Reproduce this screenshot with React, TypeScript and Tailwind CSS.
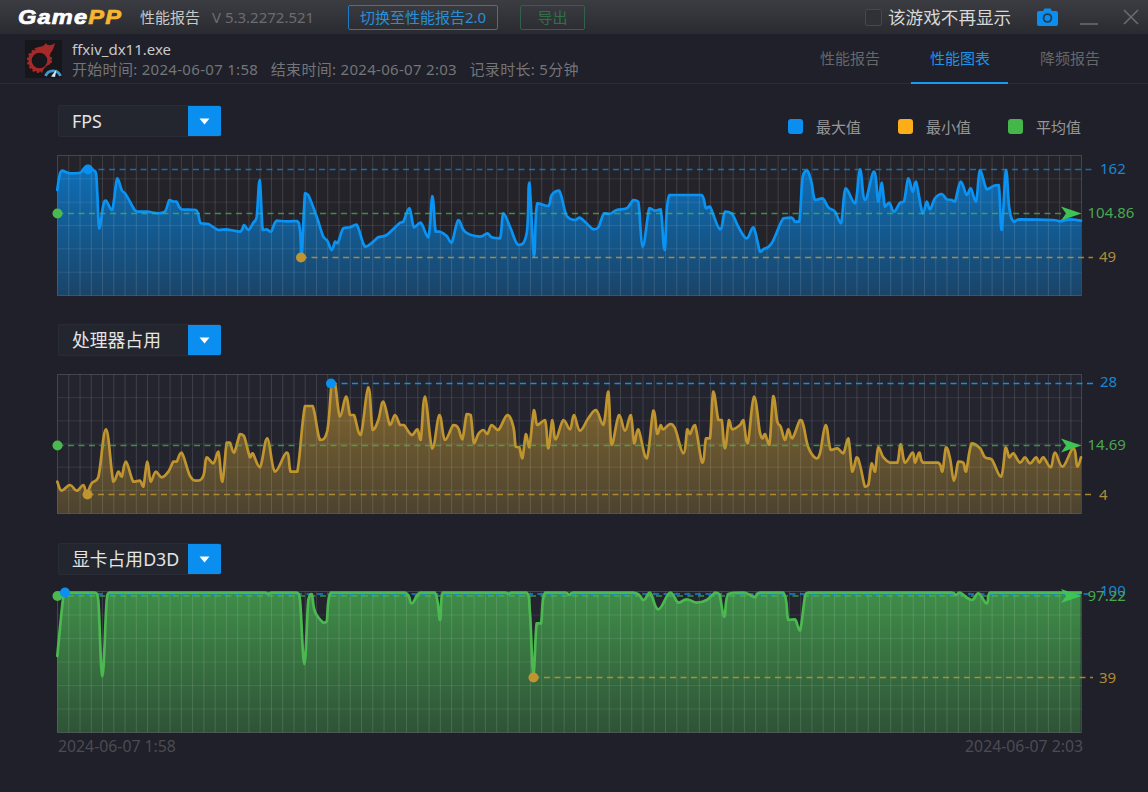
import React from "react";

type P = [number, number];
const seg = (ox: number, oy: number, flat: number[]): P[] => {
  const r: P[] = [];
  for (let i = 0; i < flat.length; i += 2) r.push([ox + flat[i] / 3, oy + flat[i + 1] / 3]);
  return r;
};

const fpsPts: P[] = [
  ...seg(40, 150, [52,120,58,80,66,62,90,70,120,68,130,58,143,48,160,60,168,70,172,130,178,235,190,165,198,152,215,180,222,150,232,85,245,120,255,130,270,155,290,185,320,185,355,190,375,185,388,150,400,155,410,155,425,178,468,180,482,220,505,222,535,240,560,238,600,245,612,225,625,240,640,218,650,200,659,90,668,240,680,238,693,245,710,212,740,214,770,213,780,240,785,320,795,130,805,135,830,200,850,260,862,272,875,300,885,275,893,280,910,235,930,232,950,224,975,290,1000,275,1015,262,1040,255]),
  ...seg(400, 150, [0,218,10,215,28,175,42,232,62,218,85,262,97,138,107,245,120,245,140,258,155,278,175,210,195,245,240,260,262,250,275,262,300,265,310,190,330,230,355,285,380,250,388,98,402,318,412,160,445,168,455,135,478,122,500,198,525,210,540,203,580,238,595,232,612,190,630,192,650,180,680,175,700,150,715,155,728,290,748,175,765,182,782,178,794,300,808,135,870,135,905,135,918,175,930,170,960,238,975,185,995,190,1015,230,1040,265,1060,232]),
  ...seg(760, 150, [0,305,10,298,35,280,70,205,95,203,105,215,118,215,128,80,142,62,155,100,165,150,188,145,205,172,225,185,243,220,257,115,285,160,300,58,315,150,342,65,355,155,365,98,375,170,388,158,402,185,420,158,432,155,445,85,458,125,468,95,488,190,500,155,510,178,525,145,545,132,560,148,575,150,585,155,602,95,620,135,632,115,648,155,660,60,680,118,700,108,716,105,725,240,738,60,748,175,762,216,780,208,880,210,900,214,930,208,963,212]),
];

const cpuPts: P[] = [
  ...seg(40, 370, [52,335,65,362,90,345,110,362,130,345,140,370,155,340,175,322,198,178,220,335,235,305,245,320,258,275,280,335,300,332,310,350,322,275,332,335,347,305,365,322,385,305,400,275,410,275,425,248,450,318,470,332,490,318,500,262,520,280,535,245,547,335,560,218,570,218,582,248,600,192,612,198,630,262,638,250,660,292,682,205,705,305,740,248,752,305,772,305,795,108,818,108,840,210,862,182,875,40,885,40,900,140,918,80,930,135,942,135,962,195,985,52,998,180,1015,150,1030,95,1050,165,1065,135]),
  ...seg(400, 370, [0,165,12,165,35,195,52,178,62,210,75,80,97,235,118,135,135,210,160,165,175,175,187,208,200,132,212,135,222,220,235,192,250,180,262,192,275,165,295,180,322,135,340,170,347,230,358,232,367,265,378,192,388,232,402,120,412,165,435,150,445,235,457,150,467,208,490,150,510,178,522,135,540,182,565,145,588,120,610,165,625,65,635,225,657,135,675,182,692,135,703,220,715,178,740,265,760,122,772,192,782,165,790,178,810,162,825,175,850,250,862,178,870,192,885,165,907,278,918,205,930,205,940,65,955,150,965,150,975,235,987,150,997,178,1020,165,1030,150,1043,220,1062,80]),
  ...seg(760, 370, [0,190,8,205,15,192,28,225,40,78,52,155,62,170,75,210,85,178,97,205,120,150,130,165,145,232,168,265,180,250,197,165,212,240,232,235,250,250,265,205,277,305,290,262,300,285,315,350,325,345,335,280,345,305,355,232,370,262,390,278,412,278,422,222,435,278,458,248,465,278,478,248,490,278,535,278,547,305,558,232,570,265,582,332,595,275,610,278,618,305,635,220,660,235,675,262,695,268,723,320,737,232,748,262,760,250,780,278,795,262,810,280,828,262,838,278,850,262,872,292,885,248,908,290,940,235,952,290,963,262]),
];

const gpuPts: P[] = [
  ...seg(40, 580, [52,228,70,50,78,38,165,38,175,60,187,290,200,60,208,38,675,38,685,42,695,38,770,38,780,60,793,252,805,60,815,42,825,95,850,128,860,125,872,38,1095,38,1115,70,1140,38,1185,38]),
  ...seg(440, 580, [0,120,8,38,195,38,205,42,215,38,260,38,270,100,280,285,290,130,303,130,315,38,375,38,388,45,400,38,580,38,610,60,630,38,655,88,690,38,715,68,740,58,770,68,800,60,825,38,838,42,853,110,865,42,910,38,930,45,945,52,960,38,1030,38,1045,120,1065,118,1080,152,1095,50,1105,38]),
  ...seg(820, 570, [70,68,395,68,408,75,420,68,455,90,475,70,500,100,510,68,782,68]),
];

const clamp = (v: number, a: number, b: number) => Math.min(Math.max(a, b), Math.max(Math.min(a, b), v));

function smooth(pts: P[]): string {
  let d = `M${pts[0][0].toFixed(1)} ${pts[0][1].toFixed(1)}`;
  const k = 0.2;
  for (let i = 0; i < pts.length - 1; i++) {
    const p0 = pts[Math.max(0, i - 1)];
    const p1 = pts[i];
    const p2 = pts[i + 1];
    const p3 = pts[Math.min(pts.length - 1, i + 2)];
    const c1x = p1[0] + (p2[0] - p0[0]) * k;
    const c1y = clamp(p1[1] + (p2[1] - p0[1]) * k, p1[1], p2[1]);
    const c2x = p2[0] - (p3[0] - p1[0]) * k;
    const c2y = clamp(p2[1] - (p3[1] - p1[1]) * k, p1[1], p2[1]);
    d += `C${clamp(c1x, p1[0], p2[0]).toFixed(1)} ${c1y.toFixed(1)} ${clamp(c2x, p1[0], p2[0]).toFixed(1)} ${c2y.toFixed(1)} ${p2[0].toFixed(1)} ${p2[1].toFixed(1)}`;
  }
  return d;
}

const BLUE = "#0a90f0";
const GREEN = "#4cb950";
const ORANGE = "#c0952f";

type ChartProps = {
  id: string;
  top: number;
  bottom: number;
  pts: P[];
  line: string;
  fillTop: string;
  fillBottom: string;
  bg: string;
  maxY: number;
  avgY: number;
  minY: number;
  maxX: number;
  maxOpacity: number;
  maxDotY?: number;
  minX: number;
  maxL: string;
  avgL: string;
  minL: string;
  maxLY: number;
  avgLY: number;
  minLY: number;
};

function Chart(c: ChartProps) {
  const L = 57.5;
  const R = 1081.5;
  const T = c.top + 0.5;
  const B = c.bottom - 0.5;
  const h = c.bottom - c.top;
  const last = c.pts[c.pts.length - 1];
  const first = c.pts[0];
  const line = smooth(c.pts);
  const area = `${line}L${last[0]} ${B}L${first[0]} ${B}Z`;
  const vs: number[] = [];
  for (let x = L + 11.26; x < R; x += 11.26) vs.push(x);
  const hs = [1, 2, 3, 4, 5].map((i) => T + ((B - T) * i) / 6);
  return (
    <svg
      className="block overflow-visible"
      width={1148}
      height={h}
      viewBox={`0 ${c.top} 1148 ${h}`}
      style={{ fontFamily: '"Noto Sans", sans-serif' }}
    >
      <defs>
        <linearGradient id={c.id} x1="0" y1="0" x2="0" y2="1">
          <stop offset="0" stopColor={c.fillTop} />
          <stop offset="1" stopColor={c.fillBottom} />
        </linearGradient>
      </defs>
      <rect x={L} y={T} width={R - L} height={B - T} fill={c.bg} />
      <path d={area} fill={`url(#${c.id})`} />
      {vs.map((x) => (
        <line key={x} x1={x} x2={x} y1={T} y2={B} stroke="#ffffff" strokeOpacity={0.13} />
      ))}
      {hs.map((y) => (
        <line key={y} x1={L} x2={R} y1={y} y2={y} stroke="#ffffff" strokeOpacity={0.09} />
      ))}
      <rect x={L} y={T} width={R - L} height={B - T} fill="none" stroke="#ffffff" strokeOpacity={0.16} />
      <line x1={c.maxX} x2={1093} y1={c.maxY} y2={c.maxY} stroke={BLUE} strokeOpacity={c.maxOpacity} strokeWidth={1.4} strokeDasharray="6 4.5" />
      <path d={line} fill="none" stroke={c.line} strokeWidth={2.7} strokeLinejoin="round" strokeLinecap="round" />
      <line x1={L} x2={1062} y1={c.avgY} y2={c.avgY} stroke={GREEN} strokeOpacity={0.7} strokeWidth={1.4} strokeDasharray="6 4.5" />
      <line x1={c.minX} x2={1093} y1={c.minY} y2={c.minY} stroke={ORANGE} strokeOpacity={0.85} strokeWidth={1.4} strokeDasharray="6 4.5" />
      <circle cx={L} cy={c.avgY} r={5} fill={GREEN} />
      <circle cx={c.maxX} cy={c.maxDotY ?? c.maxY} r={5} fill={BLUE} />
      <circle cx={c.minX} cy={c.minY} r={5} fill={ORANGE} />
      <path d={`M1061 ${c.avgY - 7}L1081.5 ${c.avgY}L1061 ${c.avgY + 7}L1066 ${c.avgY}Z`} fill="#3fc453" />
      <text x={1100} y={c.maxLY} dominantBaseline="central" fontSize={15} fill="#1a86d0">{c.maxL}</text>
      <text x={1087.5} y={c.avgLY} dominantBaseline="central" fontSize={15} fill="#4aa552">{c.avgL}</text>
      <text x={1099} y={c.minLY} dominantBaseline="central" fontSize={15} fill="#b08a35">{c.minL}</text>
    </svg>
  );
}

function Select({ label }: { label: string }) {
  return (
    <div className="ml-[58px] flex h-8 w-[163px] overflow-hidden rounded-[2px] border-y border-l border-[#292c34] bg-[#23262e]">
      <div className="flex-1 truncate pl-[13px] text-[17.8px] leading-[30px] text-[#e4e4e4]">{label}</div>
      <div className="-my-px flex h-8 w-[33px] flex-none items-center justify-center rounded-r-[2px] bg-[#0a8ff0]">
        <svg width="11" height="7" viewBox="0 0 11 7">
          <path d="M0.5 0.5H10.5L5.5 6.5Z" fill="#ffffff" />
        </svg>
      </div>
    </div>
  );
}

function Legend({ color, label }: { color: string; label: string }) {
  return (
    <div className="flex w-[110px] items-center">
      <span className="h-[15px] w-[15px] rounded-[3px]" style={{ backgroundColor: color }} />
      <span className="ml-[13px] mt-[2px] text-[15px] leading-5 text-[#969799]">{label}</span>
    </div>
  );
}

function GameIcon() {
  return (
    <svg width="37" height="38" viewBox="0 0 37 38" className="flex-none">
      <rect width="37" height="38" fill="#17171b" />
      <circle cx="14.5" cy="20.5" r="9.5" fill="none" stroke="#a52a2a" strokeWidth="3.4" />
      <circle cx="14.5" cy="20.5" r="11.6" fill="none" stroke="#a52a2a" strokeWidth="2" strokeDasharray="2.4 2.2" />
      <path d="M9 9C13 6 18 8 21 3C22 6 26 6 30 3C29 8 27 12 24 15L20 13Z" fill="#a52a2a" />
      <circle cx="28" cy="35" r="11" fill="#17171b" />
      <path d="M20.5 36A8 8 0 0 1 35.5 36" fill="none" stroke="#3f9ad0" strokeWidth="2.8" />
      <path d="M26 36.5L31.5 29.5L30 37Z" fill="#d8e8f0" />
    </svg>
  );
}

function Tab({ label, active }: { label: string; active?: boolean }) {
  return (
    <div className="relative flex w-[110px] items-center justify-center">
      <span className={active ? "text-[15px] text-[#1f93e6]" : "text-[15px] text-[#66676b]"}>{label}</span>
      {active && <span className="absolute bottom-[-1px] left-[6px] h-[2px] w-[97px] bg-[#1a9bf0]" />}
    </div>
  );
}

export default function App() {
  return (
    <div
      className="h-[792px] w-[1148px] overflow-hidden bg-[#1f2029]"
      style={{ fontFamily: '"Noto Sans", "Noto Sans CJK SC", sans-serif' }}
    >
      <header className="flex h-[34px] items-center bg-gradient-to-b from-[#3c3d42] to-[#2a2b30] pl-[18px]">
        <div className="w-[122px] flex-none">
          <div
            className="flex w-max origin-left scale-x-[1.18] select-none items-baseline text-[20px] font-bold italic leading-none tracking-[1px] [-webkit-text-stroke:0.7px]"
            style={{ fontFamily: '"Liberation Sans", sans-serif' }}
          >
            <span className="text-white">Game</span>
            <span className="text-[#f7b531]">PP</span>
          </div>
        </div>
        <span className="text-[15px] text-[#c8c8c8]">性能报告</span>
        <span className="ml-3 w-[136px] flex-none text-[15px] text-[#6b6c70]">V 5.3.2272.521</span>
        <div className="flex h-[25px] w-[150px] flex-none items-center justify-center rounded-[2px] border border-[#1a7cc4] text-[15px] text-[#2a8fd6]">切换至性能报告2.0</div>
        <div className="ml-[22px] flex h-[25px] w-[65px] flex-none items-center justify-center rounded-[2px] border border-[#33604a] text-[15px] text-[#2f7048]">导出</div>
        <div className="ml-[280px] h-[17px] w-[17px] flex-none rounded-[2px] border border-[#47484d] bg-[#303136]" />
        <span className="ml-[6px] text-[17.6px] text-[#d8d8d8]">该游戏不再显示</span>
        <svg className="ml-[26px] flex-none" width="21" height="18" viewBox="0 0 21 18">
          <path d="M2 3H6L7.5 0.5H13.5L15 3H19A2 2 0 0 1 21 5V16A2 2 0 0 1 19 18H2A2 2 0 0 1 0 16V5A2 2 0 0 1 2 3Z" fill="#0a8ff0" />
          <circle cx="10.5" cy="10" r="4.8" fill="#2d3a48" />
          <circle cx="10.5" cy="10" r="3" fill="#0a8ff0" />
        </svg>
        <div className="ml-[22px] mt-[13px] h-[2px] w-[18px] flex-none bg-[#5c5d61]" />
        <svg className="ml-[25px] flex-none" width="16" height="16" viewBox="0 0 16 16">
          <path d="M1 1L15 15M15 1L1 15" stroke="#6a6b6f" strokeWidth="1.6" />
        </svg>
      </header>

      <div className="flex h-[50px] items-center border-b border-[#2b2c33] pl-[25px]">
        <GameIcon />
        <div className="ml-[10px] flex flex-col">
          <span className="text-[15px] leading-[20px] text-[#c9c9c9]">ffxiv_dx11.exe</span>
          <span className="text-[15px] leading-[20px] tracking-[0.3px] text-[#747578]">
            开始时间: 2024-06-07 1:58 &nbsp; 结束时间: 2024-06-07 2:03 &nbsp; 记录时长: 5分钟
          </span>
        </div>
        <nav className="ml-auto mr-[23px] flex h-full">
          <Tab label="性能报告" />
          <Tab label="性能图表" active />
          <Tab label="降频报告" />
        </nav>
      </div>

      <main className="flex flex-col">
        <section className="mt-[21px]">
          <div className="flex items-start justify-between">
            <Select label="FPS" />
            <div className="mr-[30px] mt-[10px] flex w-[330px]">
              <Legend color="#0a8ff0" label="最大值" />
              <Legend color="#fdad17" label="最小值" />
              <Legend color="#45b649" label="平均值" />
            </div>
          </div>
          <div className="mt-[18px]">
            <Chart id="g1" top={155} bottom={296} pts={fpsPts} line="#0a93f2" fillTop="#0d6fb8" fillBottom="#1a4468" bg="#24232a" maxY={169.5} avgY={213.5} minY={257.5} maxX={88} maxOpacity={0.7} minX={301} maxL="162" avgL="104.86" minL="49" maxLY={168} avgLY={212} minLY={256} />
          </div>
        </section>

        <section className="mt-[28px]">
          <Select label="处理器占用" />
          <div className="mt-[18px]">
            <Chart id="g2" top={374} bottom={514} pts={cpuPts} line="#c0952f" fillTop="#836730" fillBottom="#4c432f" bg="#23242d" maxY={383.5} avgY={445.5} minY={494.5} maxX={331} maxOpacity={1} minX={87.5} maxL="28" avgL="14.69" minL="4" maxLY={381} avgLY={444} minLY={494} />
          </div>
        </section>

        <section className="mt-[29px]">
          <Select label="显卡占用D3D" />
          <div className="mt-[16px]">
            <Chart id="g3" top={591} bottom={733} pts={gpuPts} line="#4cb950" fillTop="#3f8d49" fillBottom="#2f5337" bg="#23242d" maxY={594} avgY={596} minY={677.5} maxX={65} maxOpacity={0.9} maxDotY={592.5} minX={533.5} maxL="100" avgL="97.22" minL="39" maxLY={590} avgLY={595} minLY={676.5} />
          </div>
          <div className="ml-[58px] mt-[3px] flex w-[1025px] justify-between text-[15.8px] leading-5 text-[#4b4c53]">
            <span>2024-06-07 1:58</span>
            <span>2024-06-07 2:03</span>
          </div>
        </section>
      </main>
    </div>
  );
}
